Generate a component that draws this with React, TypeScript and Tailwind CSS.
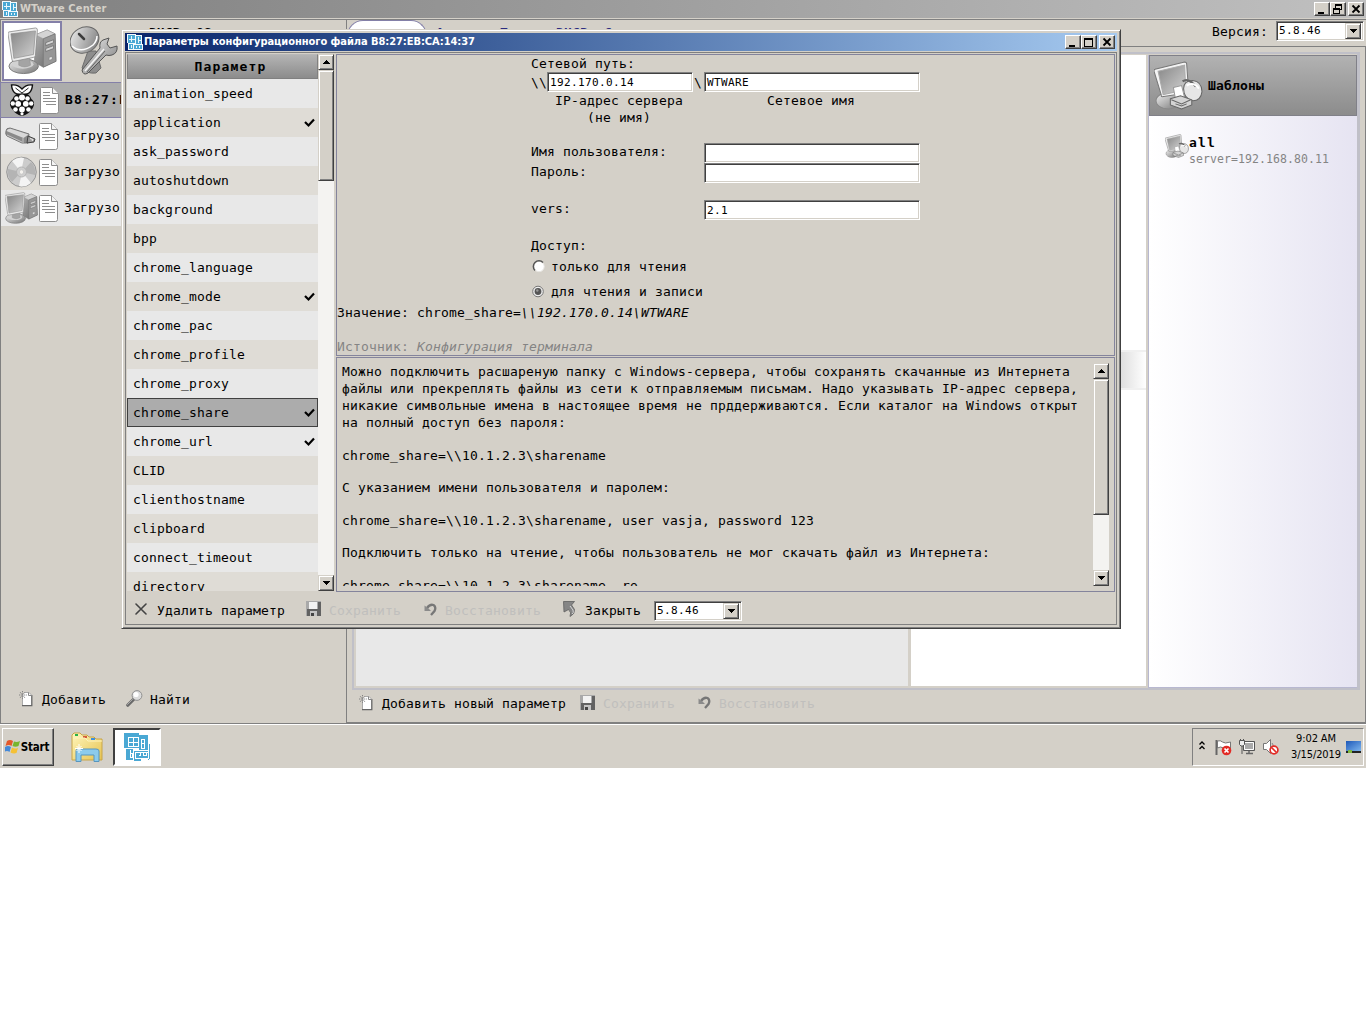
import React from "react";

const mono = "font-['DejaVu_Sans_Mono',monospace] text-[13px] tracking-[0.174px] whitespace-pre";
const monoWide = "font-['DejaVu_Sans_Mono',monospace] text-[13px] font-bold tracking-[1.174px] whitespace-pre";
const monoSmall = "font-['DejaVu_Sans_Mono',monospace] text-[11px] tracking-[0.378px] whitespace-pre";
const tahoma = "font-['DejaVu_Sans_Condensed','DejaVu_Sans',sans-serif]";

function Logo({ size = 16, plain = false }: { size?: number; plain?: boolean }) {
  if (!plain) {
    return (
      <svg width="16" height="16" viewBox="0 0 16 16" className="shrink-0" shapeRendering="crispEdges">
        <path d="M0 0h9v1h6v9h1v6H1V9H0z" fill="#f4fafd" />
        <path d="M1 1h7v8H1zM9 2h5v8H9zM2 10h4v5H2zM7 11h8v4H7z" fill="#4aa8d4" />
        <path d="M4 2h1v6H4zM2 5h6v1H2zM11 3h1v6h-1zM11 6h3v1h-3zM4 11h1v3H4zM9 12h1v2H9zM12 12h1v2h-1z" fill="#e8f5fb" />
      </svg>
    );
  }
  return (
    <svg width={size} height={size} viewBox="0 0 28 28" className="shrink-0" shapeRendering="crispEdges">
      <path d="M1 0h15v15H1zM16 2h9v15h-9zM3 16h7v11H3zM11 18h14v9H11zM26 11h1v15h-9v2h-7v-1h15z" fill="#4aa8d4" />
      <path
        d="M5.500 4.500h10v9h-10zM10.500 4.500v9M5.500 9.500h10M18.500 6.500h3v9h-3zM18.500 10.500h3M7.500 17v7h2v-4h-2M12.500 19.500h13v6h-13zM15.500 22h2v-2M20.500 20v2h3v-2"
        stroke="#fff"
        fill="none"
      />
    </svg>
  );
}

function Gradients() {
  return (
    <svg width="0" height="0" className="absolute">
      <defs>
        <linearGradient id="metal" x1="0" y1="0" x2="1" y2="1">
          <stop offset="0" stopColor="#f2f2f2" />
          <stop offset="1" stopColor="#747474" />
        </linearGradient>
        <linearGradient id="tower" x1="0" y1="0" x2="1" y2="1">
          <stop offset="0" stopColor="#b4b4b4" />
          <stop offset="1" stopColor="#606060" />
        </linearGradient>
        <linearGradient id="screen" x1="0" y1="0" x2="1" y2="1">
          <stop offset="0" stopColor="#868686" />
          <stop offset="1" stopColor="#d2d2d2" />
        </linearGradient>
        <linearGradient id="folder" x1="0" y1="0" x2="1" y2="1">
          <stop offset="0" stopColor="#fff6bd" />
          <stop offset="1" stopColor="#e6c350" />
        </linearGradient>
        <linearGradient id="desk" x1="0" y1="0" x2="1" y2="1">
          <stop offset="0" stopColor="#1d58b8" />
          <stop offset="1" stopColor="#7db5ee" />
        </linearGradient>
      </defs>
    </svg>
  );
}

function Computer({ size }: { size: number }) {
  return (
    <svg width={size} height={size} viewBox="0 0 50 50" className="shrink-0">
      <path d="M28 8l12-5 8 4 1 28-13 6-9-5z" fill="url(#tower)" stroke="#777" strokeWidth=".6" />
      <path d="M28 8l12-5 8 4-12 5z" fill="#d4d4d4" stroke="#999" strokeWidth=".5" />
      <path d="M36 12l12-5 1 28-13 6z" fill="#979797" stroke="#6d6d6d" strokeWidth=".6" />
      <path d="M38.500 16l8-3v3l-8 3zM38.500 22l8-3v3l-8 3z" fill="#d6d6d6" stroke="#666" strokeWidth=".7" />
      <path d="M42 31l3-1v3l-3 1z" fill="#eee" stroke="#777" strokeWidth=".5" />
      <ellipse cx="16" cy="40" rx="15" ry="7.500" fill="url(#metal)" stroke="#7c7c7c" />
      <ellipse cx="15" cy="38" rx="11" ry="4.500" fill="#d2d2d2" />
      <path d="M11 31h11l1 8q-6 3.500-12 0z" fill="#a4a4a4" stroke="#8c8c8c" strokeWidth=".5" />
      <path d="M1 5l27-4q2 0 2 2l-2 26q0 2-2 2L6 35q-2 0-2-2L0 7q0-2 1-2z" fill="#ececec" stroke="#888" strokeWidth=".8" />
      <path d="M3 7l25-3-2 24-20 4z" fill="url(#screen)" stroke="#8c8c8c" strokeWidth=".7" />
    </svg>
  );
}

function Dish() {
  return (
    <svg width="48" height="50" viewBox="0 0 48 50" className="shrink-0">
      <path d="M18 25l-6 17q4 6 14 5l5-5-5-17z" fill="#8d8d8d" stroke="#6d6d6d" />
      <path d="M12 44l18-22q-1-6 3-8l6-2-2 6 3 4 7-2q1 7-5 9-3 1-6 0L18 47q-5 3-6-3z" fill="url(#metal)" stroke="#555" />
      <path d="M15 45l19-22" stroke="#f4f4f4" strokeWidth="1.500" />
      <path d="M17 46l18-21" stroke="#666" />
      <ellipse cx="14.500" cy="14" rx="15" ry="12.500" transform="rotate(-30 14.500 14)" fill="url(#metal)" stroke="#666" />
      <path d="M2 20q9 8 21-1 4-4 4-9" stroke="#fff" strokeWidth="1.500" fill="none" />
      <path d="M9 8l5 5" stroke="#3c3c3c" strokeWidth="2.500" strokeLinecap="round" />
    </svg>
  );
}

function Raspberry() {
  const spots = [
    [12.500, 13.500, 3], [7, 14.500, 2.300], [18, 14.500, 2.300], [3.300, 19.500, 2.200], [21.700, 19.500, 2.200],
    [8.700, 19.800, 2.900], [16.300, 19.800, 2.900], [12.500, 25.500, 2.900], [6, 25.500, 2.300], [19, 25.500, 2.300], [12.500, 29.800, 1.600],
  ];
  return (
    <svg width="26" height="32" viewBox="0 0 25 32" className="shrink-0">
      <path d="M12.500 9Q5 9 3 15 0 17 .5 21q1 4 3 5 2 4 9 6 7-2 9-6 2-1 3-5 .5-4-2.500-6-2-6-9.500-6z" fill="#111" />
      <path d="M12.500 10Q3 12 2 1q6-1 10.500 4Q17 0 23 1q-1 11-10.500 9z" fill="#fff" stroke="#111" strokeWidth="1.400" />
      <path d="M6 4l6.500 5L19 4" fill="none" stroke="#111" strokeWidth=".9" />
      {spots.map(([x, y, r]) => (
        <circle key={x + "-" + y} cx={x} cy={y} r={r} fill="#fff" />
      ))}
    </svg>
  );
}

function Usb() {
  return (
    <svg width="32" height="18" viewBox="0 0 32 18" className="shrink-0">
      <path d="M1 4q0-3 4-3l19 6-1 9-6 0L2 9Q0 7 1 4z" fill="#8a8a8a" stroke="#777" />
      <path d="M1.500 4q1-2.500 4-2.300l18 5.800-5 3.500z" fill="#d8d8d8" />
      <path d="M18 11v5M2 8l15 7" stroke="#c4c4c4" fill="none" />
      <path d="M23 9l7 3-1 3-7 1z" fill="#999" stroke="#444" />
      <path d="M25 11.500l3 1-1 1.500" stroke="#eee" fill="none" />
    </svg>
  );
}

function Disc() {
  return (
    <svg width="31" height="32" viewBox="0 0 31 32" className="shrink-0">
      <circle cx="15.500" cy="16" r="14.800" fill="#cccccc" stroke="#969696" />
      <path d="M15 16L6 5Q12 0 18 2zM16 16l9 11q-6 5-12 3z" fill="#f4f4f4" />
      <path d="M15 16L2 13q-1 8 4 13zM16 16l13 3q1-8-4-13z" fill="#b4b4b4" />
      <circle cx="15.500" cy="16" r="5" fill="#cecece" stroke="#b4b4b4" />
      <circle cx="15.500" cy="16" r="2.300" fill="#f4f2ee" stroke="#c8c8c8" />
    </svg>
  );
}

function Page() {
  return (
    <svg width="19" height="27" viewBox="0 0 19 27" className="shrink-0">
      <path d="M1.500.5h11l6 6v18q0 2-2 2h-15q-1 0-1-1v-24q0-1 1-1z" fill="#fff" stroke="#8d8d8d" />
      <path d="M12.500.5v6h6" fill="#f4f4f4" stroke="#8d8d8d" />
      <path d="M3 5.500h7M3 8.500h7M3 11.500h13M3 14.500h13M6 17.500h10" stroke="#8d8d8d" />
    </svg>
  );
}

function Template({ size }: { size: number }) {
  return (
    <svg width={size} height={size} viewBox="0 0 48 48" className="shrink-0">
      <ellipse cx="14" cy="39" rx="12" ry="8" fill="url(#metal)" stroke="#888" />
      <path d="M1 8L30 1q2 0 2 2l2 28-26 4Q7 35 7 33L0 10q0-2 1-2z" fill="#f4f4f4" stroke="#777" />
      <path d="M4 10l26-6 1 24-22 5z" fill="url(#screen)" stroke="#aaa" />
      <path d="M29 27q0-8 9-8 9 1 9 11-1 9-9 9-9-2-9-12z" fill="#e6e6e6" stroke="#666" />
      <path d="M28 20q4-3 9 1l4 4" fill="none" stroke="#666" strokeWidth="2.200" />
      <path d="M32 24q7-4 12 3" fill="none" stroke="#fff" strokeWidth="2" />
      <path d="M19 26l8-2 3 12-9 1z" fill="#fff" stroke="#999" />
      <path d="M16 37l10-3 11 4v5l-10 4-11-4z" fill="#d4d4d4" stroke="#666" />
      <path d="M17 38l10 4 9-4M21 42l6 2 5-2" fill="none" stroke="#666" />
    </svg>
  );
}

function NewDoc() {
  return (
    <svg width="14" height="16" viewBox="0 0 14 16" className="shrink-0">
      <path d="M3.500 4v10.500h9V4l-3-2.500H6" fill="#fff" />
      <path d="M12.800 4v10.700H3" fill="none" stroke="#666" strokeWidth="1.300" />
      <path d="M3.500 6v8M6 1.500h4l3 3" fill="none" stroke="#aaa" />
      <path d="M9.500 1.500v3h3" fill="none" stroke="#888" />
      <path d="M3.500 0v8M0 4h8M1 1l5 6M6 1L1 7" stroke="#7b7b7b" strokeWidth=".9" strokeDasharray="1 .7" />
    </svg>
  );
}

function Magnifier() {
  return (
    <svg width="17" height="17" viewBox="0 0 17 17" className="shrink-0">
      <path d="M1.800 15.200l6-6" stroke="#6a6a6a" strokeWidth="3.200" strokeLinecap="round" />
      <path d="M1.500 14.500l5-5" stroke="#aaa" strokeLinecap="round" />
      <circle cx="11" cy="5.500" r="4.900" fill="#dcdcdc" stroke="#909090" />
      <circle cx="10" cy="4.500" r="2.600" fill="#fff" />
    </svg>
  );
}

function Save() {
  return (
    <svg width="15" height="15" viewBox="0 0 15 15" className="shrink-0" shapeRendering="crispEdges">
      <path d="M0 0h15v15H0z" fill="#a9a9a9" />
      <path d="M1 8h14v7H1zM12 1h3v14h-3z" fill="#626262" />
      <path d="M3 1h8v7H3z" fill="#f2f2f2" />
      <path d="M4 10h7v5H4z" fill="#c4c4c4" />
      <path d="M5 12h3v3H5z" fill="#444" />
    </svg>
  );
}

function Undo() {
  return (
    <svg width="13" height="13" viewBox="0 0 13 13" className="shrink-0">
      <path d="M3 5Q6 .8 9.500 2 12.500 4 10.500 8L7 12" fill="none" stroke="#777" strokeWidth="2.300" />
      <path d="M.5 2.500v5.500h6.500L4.800 5.800z" fill="#8b8b8b" />
    </svg>
  );
}

function Exit() {
  return (
    <svg width="13" height="16" viewBox="0 0 13 16" className="shrink-0">
      <path d="M.5.5h11L8.500 4l3 4.500Q12 13 7 15.500q2-4-1.500-7L1 11z" fill="#858585" stroke="#5f5f5f" strokeWidth=".8" />
      <path d="M7 5l3 4q1 3-1 4" fill="none" stroke="#d8d8d8" />
    </svg>
  );
}

function Cross() {
  return (
    <svg width="12" height="12" viewBox="0 0 12 12" className="shrink-0">
      <path d="M1 1l10 10M11 1L1 11" stroke="#444" strokeWidth="1.600" strokeLinecap="round" />
    </svg>
  );
}

const raised =
  "bg-[#d4d0c8] border border-t-[#d4d0c8] border-l-[#d4d0c8] border-b-[#404040] border-r-[#404040] shadow-[inset_1px_1px_0_#ffffff,inset_-1px_-1px_0_#808080]";
const raisedWhite =
  "bg-[#d4d0c8] border border-t-white border-l-white border-b-[#404040] border-r-[#404040] shadow-[inset_-1px_-1px_0_#808080]";
const sunken =
  "bg-white border border-t-[#808080] border-l-[#808080] border-b-white border-r-white shadow-[inset_1px_1px_0_#404040,inset_-1px_-1px_0_#d4d0c8]";

function Arrow({ up = false }: { up?: boolean }) {
  return (
    <svg width="7" height="4" viewBox="0 0 7 4" shapeRendering="crispEdges">
      <path d={up ? "M3 0h1v1h1v1h1v1h1v1H0V3h1V2h1V1h1z" : "M0 0h7v1H6v1H5v1H4v1H3V3H2V2H1V1H0z"} />
    </svg>
  );
}

function ScrollBar({ thumb }: { thumb: string }) {
  return (
    <div className="flex w-4 shrink-0 flex-col bg-[#f4f3f1]">
      <div className={"flex h-4 shrink-0 items-center justify-center " + raised}>
        <Arrow up />
      </div>
      <div className={"shrink-0 " + thumb + " " + raised} />
      <div className="flex-1" />
      <div className={"flex h-4 shrink-0 items-center justify-center " + raised}>
        <Arrow />
      </div>
    </div>
  );
}

function WindowButtons({ restore = false }: { restore?: boolean }) {
  const b = "flex h-[14px] w-4 items-center justify-center " + raisedWhite;
  return (
    <div className="flex">
      <div className={b}>
        <svg width="12" height="11" shapeRendering="crispEdges"><path d="M2 8h6v2H2z" /></svg>
      </div>
      <div className={b}>
        <svg width="12" height="11" shapeRendering="crispEdges" fill="none" stroke="#000">
          {restore ? (
            <path d="M3.500 4V.5h6v5H8M3 1.500h7M1.500 4.500h6v5h-6zM1 5.500h7" />
          ) : (
            <path d="M1.500 1.500h8v8h-8zM1 2.500h9" />
          )}
        </svg>
      </div>
      <div className={"ml-[2px] " + b}>
        <svg width="12" height="11"><path d="M2.500 1.500l7 7M9.500 1.500l-7 7" stroke="#000" strokeWidth="1.800" /></svg>
      </div>
    </div>
  );
}

function VersionSelect() {
  return (
    <div className={"flex h-5 w-[88px] items-center justify-between p-[2px] " + sunken}>
      <span className={"pt-[1px] " + monoSmall}>5.8.46</span>
      <span className={"flex h-4 w-4 items-center justify-center " + raised}>
        <Arrow />
      </span>
    </div>
  );
}

const params: [string, boolean][] = [
  ["animation_speed", false], ["application", true], ["ask_password", false], ["autoshutdown", false],
  ["background", false], ["bpp", false], ["chrome_language", false], ["chrome_mode", true],
  ["chrome_pac", false], ["chrome_profile", false], ["chrome_proxy", false], ["chrome_share", true],
  ["chrome_url", true], ["CLID", false], ["clienthostname", false], ["clipboard", false],
  ["connect_timeout", false], ["directory", false],
];

function ParamTable() {
  return (
    <div className="flex h-[537px] w-[207px] shrink-0">
      <div className="h-[537px] w-[191px] overflow-hidden">
        <div className={"flex h-[25px] items-center justify-center border border-[#808080] border-t-[#b8b8b8] bg-gradient-to-b from-[#b4b4b4] to-[#8c8c8c] pl-4 " + monoWide}>
          Параметр
        </div>
        {params.map(([name, checked], i) => {
          const bg =
            name === "chrome_share"
              ? "bg-[#acacac] outline outline-1 -outline-offset-1 outline-[#404040]"
              : i % 2 === 0
                ? "bg-[#e8e8e8]"
                : "bg-[#dfdcd6]";
          return (
            <div key={name} className={"flex h-[29px] items-center justify-between pt-px pr-[3px] pl-[6px] " + mono + " " + bg}>
              <span>{name}</span>
              {checked && (
                <svg width="11" height="10" viewBox="0 0 11 10" className="mb-px">
                  <path d="M1 4l3.500 3.500L10 1.500" fill="none" stroke="#000" strokeWidth="2.200" />
                </svg>
              )}
            </div>
          );
        })}
      </div>
      <ScrollBar thumb="h-[111px]" />
    </div>
  );
}

function Field({ value, width }: { value: string; width: string }) {
  return (
    <div className={"flex h-5 shrink-0 items-center px-[2px] " + width + " " + sunken}>
      <span className={monoSmall}>{value}</span>
    </div>
  );
}

function Radio({ on = false }: { on?: boolean }) {
  return on ? (
    <svg width="13" height="13" viewBox="0 0 13 13" className="mr-[7px]">
      <circle cx="7" cy="6.500" r="5.300" fill="#eee" stroke="#777" />
      <circle cx="7" cy="6.500" r="3.400" fill="#555" />
      <circle cx="6.300" cy="5.500" r="1.200" fill="#999" />
    </svg>
  ) : (
    <svg width="14" height="13" viewBox="0 0 14 13" className="mr-[6px]">
      <circle cx="8" cy="6.500" r="5.200" fill="#fff" stroke="#e8e6e2" />
      <path d="M4 10.500A5.200 5.200 0 0 1 12 2.500" fill="none" stroke="#555" strokeWidth="1.500" />
    </svg>
  );
}

function Editor() {
  return (
    <div className={"flex h-[302px] flex-col border border-[#84849c] leading-[17px] " + mono}>
      <div className="flex flex-col pl-[194px]">
        <div className="h-[17px]">Сетевой путь:</div>
        <div className="flex h-5 items-center">
          <span className="w-4">\\</span>
          <Field value="192.170.0.14" width="w-[146px]" />
          <span className="w-[11px] pl-px">\</span>
          <Field value="WTWARE" width="w-[216px]" />
        </div>
        <div className="flex">
          <div className="w-[176px] pl-6">{"IP-адрес сервера\n    (не имя)"}</div>
          <div className="w-[208px] text-center">Сетевое имя</div>
        </div>
        <div className="mt-[17px] flex h-5 items-center">
          <span className="w-[173px] pb-[3px]">Имя пользователя:</span>
          <Field value="" width="w-[216px]" />
        </div>
        <div className="flex h-5 items-center">
          <span className="w-[173px] pb-[3px]">Пароль:</span>
          <Field value="" width="w-[216px]" />
        </div>
        <div className="mt-[17px] flex h-5 items-center">
          <span className="w-[173px] pb-[3px]">vers:</span>
          <Field value="2.1" width="w-[216px]" />
        </div>
        <div className="mt-[17px]">Доступ:</div>
        <div className="mt-1 flex items-center"><Radio />только для чтения</div>
        <div className="mt-2 flex items-center"><Radio on />для чтения и записи</div>
      </div>
      <div className="mt-1">Значение: chrome_share=<i>\\192.170.0.14\WTWARE</i></div>
      <div className="mt-[17px] text-[#848484]">Источник: <i>Конфигурация терминала</i></div>
    </div>
  );
}

function Help() {
  return (
    <div className="mt-px flex h-[235px] border border-[#84849c] p-[5px]">
      <div className={"flex h-[223px] flex-1 flex-col gap-[15.5px] overflow-hidden leading-[17px] " + mono}>
        <p>{"Можно подключить расшареную папку с Windows-сервера, чтобы сохранять скачанные из Интернета\nфайлы или прекреплять файлы из сети к отправляемым письмам. Надо указывать IP-адрес сервера,\nникакие символьные имена в настоящее время не прддерживаются. Если каталог на Windows открыт\nна полный доступ без пароля:"}</p>
        <p>{"chrome_share=\\\\10.1.2.3\\sharename"}</p>
        <p>С указанием имени пользователя и паролем:</p>
        <p>{"chrome_share=\\\\10.1.2.3\\sharename, user vasja, password 123"}</p>
        <p>Подключить только на чтение, чтобы пользователь не мог скачать файл из Интернета:</p>
        <p>{"chrome_share=\\\\10.1.2.3\\sharename, ro"}</p>
      </div>
      <ScrollBar thumb="h-[136px]" />
    </div>
  );
}

function Dialog() {
  return (
    <div className="absolute top-[29px] left-[121px] h-[600px] w-[1000px] border border-t-[#d4d0c8] border-l-[#d4d0c8] border-r-[#404040] border-b-[#404040] bg-[#d4d0c8] p-[3px] shadow-[inset_1px_1px_0_#ffffff,inset_-1px_-1px_0_#808080]">
      <div className="flex h-[18px] items-center bg-gradient-to-r from-[#0a246a] to-[#a6caf0] pr-[2px] pl-[2px]">
        <Logo />
        <span className={"ml-px flex-1 text-[11px] font-bold tracking-[-0.06px] whitespace-pre text-white " + tahoma}>
          Параметры конфигурационного файла B8:27:EB:CA:14:37
        </span>
        <WindowButtons />
      </div>
      <div className="mt-px h-[573px] border border-[#808080] p-px">
        <div className="flex h-[537px]">
          <ParamTable />
          <div className="ml-[2px] w-[780px]">
            <Editor />
            <Help />
          </div>
        </div>
        <div className={"flex h-[32px] items-center pt-[7px] pl-2 " + mono}>
          <div className="mb-[4px]"><Cross /></div>
          <span className="ml-[10px] w-[149px]">Удалить параметр</span>
          <div className="mb-[4px]"><Save /></div>
          <span className="ml-2 w-[95px] text-[#c0bfbd]">Сохранить</span>
          <div className="mb-[3px]"><Undo /></div>
          <span className="ml-2 w-[118px] text-[#c0bfbd]">Восстановить</span>
          <div className="mb-[4px]"><Exit /></div>
          <span className="ml-[9px] w-[69px]">Закрыть</span>
          <VersionSelect />
        </div>
      </div>
    </div>
  );
}

function TerminalRow({ icon, label, tone, bold = false }: { icon: React.ReactNode; label: string; tone: string; bold?: boolean }) {
  return (
    <div className={"flex h-9 items-center " + tone}>
      <div className="flex w-[38px] justify-center pl-[2px]">{icon}</div>
      <Page />
      <span className={"ml-[6px] w-[57px] overflow-hidden " + (bold ? monoWide : mono)}>{label}</span>
    </div>
  );
}

function LeftPane() {
  return (
    <div className="flex w-[346px] shrink-0 flex-col border-l border-[#808080]">
      <div className="flex h-[62px] pt-px pl-px">
        <div className="flex h-[60px] w-[60px] items-center justify-center border-2 border-[#8480a8] bg-white">
          <Computer size={49} />
        </div>
        <div className="ml-[8px] pt-[5px]"><Dish /></div>
        <span className="mt-[3px] ml-[31px] h-[17px] font-['DejaVu_Sans_Mono',monospace] text-[13px] leading-[17px] font-bold whitespace-pre">DHCP  OS</span>
      </div>
      <TerminalRow icon={<Raspberry />} label="B8:27:E" tone="bg-[#acacac] border border-[#8480a8] -ml-px pl-px" bold />
      <TerminalRow icon={<Usb />} label="Загрузо" tone="bg-[#e8e8e8]" />
      <TerminalRow icon={<Disc />} label="Загрузо" tone="bg-[#dfdcd6]" />
      <TerminalRow icon={<Computer size={33} />} label="Загрузо" tone="bg-[#e8e8e8]" />
      <div className="flex-1" />
      <div className={"mb-[11px] flex h-6 items-center pl-[18px] " + mono}>
        <div className="mb-[3px]"><NewDoc /></div>
        <span className="ml-[9px] w-[84px]">Добавить</span>
        <div className="mb-[3px]"><Magnifier /></div>
        <span className="ml-[7px]">Найти</span>
      </div>
    </div>
  );
}

function MainPane() {
  return (
    <div className="flex flex-1 flex-col border-l border-[#808080]">
      <div className="flex h-[26px] items-start">
        <div className="h-[26px] w-20 rounded-t-2xl border border-b-0 border-[#8480a8] bg-white" />
        <span className="mt-[4px] ml-[9px] w-[775px] font-['DejaVu_Sans_Mono',monospace] text-[13px] leading-[17px] font-bold tracking-[0.174px] whitespace-pre text-[#2c2c80]">Архив   Терм   DHCP  С</span>
        <span className={"mt-[3px] w-[65px] pl-px leading-[17px] " + mono}>Версия:</span>
        <div className="mt-px"><VersionSelect /></div>
      </div>
      <div className="flex flex-1 flex-col border border-[#808080] border-l-0">
        <div className="mt-[5px] mr-[5px] ml-[5px] flex h-[638px] border-2 border-r-[3px] border-[#c0c0c8] pt-px">
          <div className="w-[554px] border-b-2 border-l-2 border-[#d4d0c8] bg-[#e8e8e8]" />
          <div className="flex w-[240px] border-x-[3px] border-r-2 border-b-2 border-[#d4d0c8] bg-white">
            <div className="flex-1" />
            <div className="mt-[295px] h-10 w-[26px] border-y-2 border-[#f0f0f0] bg-gradient-to-r from-[#dedede] to-white" />
          </div>
          <div className="flex flex-1 flex-col border-b border-l border-[#b8b8d0] bg-gradient-to-r from-white to-[#e6e4f2]">
            <div className="flex h-[61px] items-center border border-[#808088] bg-gradient-to-b from-[#b2b2b2] to-[#8c8c8c] pl-[4px]">
              <Template size={49} />
              <span className={"ml-[5px] font-bold " + mono}>Шаблоны</span>
            </div>
            <div className="flex pt-[18px] pl-[16px]">
              <Template size={24} />
              <div className="leading-4">
                <div className={"mt-[1px] " + monoWide}>all</div>
                <div className="font-['DejaVu_Sans_Mono',monospace] text-[11.5px] tracking-[0.077px] text-[#848484]">server=192.168.80.11</div>
              </div>
            </div>
          </div>
        </div>
        <div className={"flex flex-1 items-center pb-[5px] pl-[12px] " + mono}>
          <div className="mb-[2px]"><NewDoc /></div>
          <span className="ml-[9px] w-[198px]">Добавить новый параметр</span>
          <div className="mb-[3px]"><Save /></div>
          <span className="ml-2 w-[95px] text-[#c0bfbd]">Сохранить</span>
          <div className="mb-[2px]"><Undo /></div>
          <span className="ml-2 text-[#c0bfbd]">Восстановить</span>
        </div>
      </div>
    </div>
  );
}

function Taskbar() {
  return (
    <div className="flex h-11 items-center border-t border-white px-[2px]">
      <div className={"flex h-[38px] w-[52px] items-center justify-center " + raisedWhite}>
        <svg width="16" height="15" viewBox="0 0 16 15">
          <path d="M2 2q3-2 6 0L6.500 7Q4 5 .5 7z" fill="#e4582b" />
          <path d="M9 2.500q3 1 6-.5l-1.500 5q-3 1.500-6 0z" fill="#77b52f" />
          <path d="M0 8q3-2 6 0l-1.500 5Q2 11-1 13z" fill="#4589d8" />
          <path d="M7 8.500q3 2 6 .2L11.500 14q-3 1-6-.5z" fill="#f5c135" />
        </svg>
        <span className={"mt-[2px] mr-[2px] text-[11.5px] font-bold tracking-[-0.2px] " + tahoma}>Start</span>
      </div>
      <svg width="32" height="31" viewBox="0 0 32 31" className="mt-[2px] ml-[17px]">
        <path d="M1 3l2-2h6l2 2h5l2 2h5l2 2h6v21H1z" fill="url(#folder)" stroke="#c8a548" />
        <path d="M4 2h3v2H4z" fill="#29b34a" />
        <path d="M12 4h4v2h-4z" fill="#d45b3a" />
        <path d="M20 6h4v2h-4z" fill="#3d8fe0" />
        <path d="M2 6h12l3 3h14" stroke="#fff4bb" fill="none" />
        <path d="M5 29.500V19q0-2 2-2h18q3 0 3 2v10.500h-5V23H10v6.500z" fill="#8ccbec" stroke="#5796bf" />
        <path d="M8 12v9M4 16.500h8M5.500 14l5 5M10.500 14l-5 5" stroke="#fff" />
      </svg>
      <div className="ml-[10px] flex h-[38px] w-[48px] items-center justify-center border-2 border-t-[#404040] border-l-[#404040] border-r-white border-b-white bg-white">
        <Logo size={28} plain />
      </div>
      <div className="flex-1" />
      <div className="flex h-[38px] w-[172px] items-center border border-t-[#808080] border-l-[#808080] border-r-white border-b-white pl-[6px]">
        <svg width="6" height="9" viewBox="0 0 6 9" fill="none" stroke="#000" strokeWidth="1.300" className="mb-[3px]"><path d="M.5 3.500L3 1l2.500 2.500M.5 8L3 5.500 5.500 8" /></svg>
        <svg width="17" height="17" viewBox="0 0 17 17" className="mt-px ml-[10px]">
          <path d="M1.500 1v15" stroke="#666" strokeWidth="2" />
          <path d="M2.500 2q3-1 5 1t8 0v7q-4 1-7-1t-6 0z" fill="#fff" stroke="#777" />
          <circle cx="11.500" cy="11.500" r="4.800" fill="#e22b25" />
          <path d="M9.500 9.500l4 4M13.500 9.500l-4 4" stroke="#fff" strokeWidth="1.700" />
        </svg>
        <svg width="16" height="16" viewBox="0 0 16 16" className="mt-px ml-[7px]">
          <path d="M4.500 2.500h11v9h-11z" fill="#aaa" stroke="#555" />
          <path d="M5.500 3.500h9v7h-9z" fill="none" stroke="#fff" />
          <path d="M7 14.500h7M10 12v2" stroke="#666" strokeWidth="1.500" />
          <path d="M.5 1.500h5v4l-1.500 1.500h-2L.5 5.500z" fill="#eee" stroke="#555" />
          <path d="M1.500 0v2M4.500 0v2M3 7v8" stroke="#555" />
        </svg>
        <svg width="16" height="16" viewBox="0 0 16 16" className="mt-px ml-[8px]">
          <path d="M.5 4.500h3l4-4v14l-4-4h-3z" fill="#fff" stroke="#777" />
          <path d="M9 4q2 2 1 5" stroke="#888" fill="none" />
          <circle cx="11" cy="11" r="3.900" fill="#fff" stroke="#e22b25" strokeWidth="1.700" />
          <path d="M8.500 8.500l5 5" stroke="#e22b25" strokeWidth="1.700" />
        </svg>
        <div className={"mt-px ml-[10px] w-[54px] text-center text-[11px] leading-4 tracking-[-0.1px] whitespace-nowrap " + tahoma}>
          9:02 AM<br />3/15/2019
        </div>
        <svg width="15" height="13" viewBox="0 0 15 13" className="mt-px ml-[3px]">
          <path d="M0 0h15v10H0z" fill="url(#desk)" />
          <path d="M0 10h15v2H0z" fill="#222" />
          <path d="M2 9h4v3H2z" fill="#7fb83e" />
        </svg>
      </div>
    </div>
  );
}

export default function App() {
  return (
    <div className="relative h-[1024px] w-[1366px] overflow-hidden bg-white text-black">
      <Gradients />
      <div className="flex h-[768px] flex-col bg-[#d4d0c8]">
        <div className="flex h-[18px] shrink-0 items-center bg-gradient-to-r from-[#808080] to-[#c0c0c0] pr-[2px] pl-[2px]">
          <Logo />
          <span className={"ml-[2px] flex-1 text-[11px] font-bold tracking-[0.15px] text-[#d4d0c8] " + tahoma}>WTware Center</span>
          <WindowButtons restore />
        </div>
        <div className="mt-px flex h-[705px] border-y border-[#808080]">
          <LeftPane />
          <MainPane />
        </div>
        <Taskbar />
      </div>
      <Dialog />
    </div>
  );
}
